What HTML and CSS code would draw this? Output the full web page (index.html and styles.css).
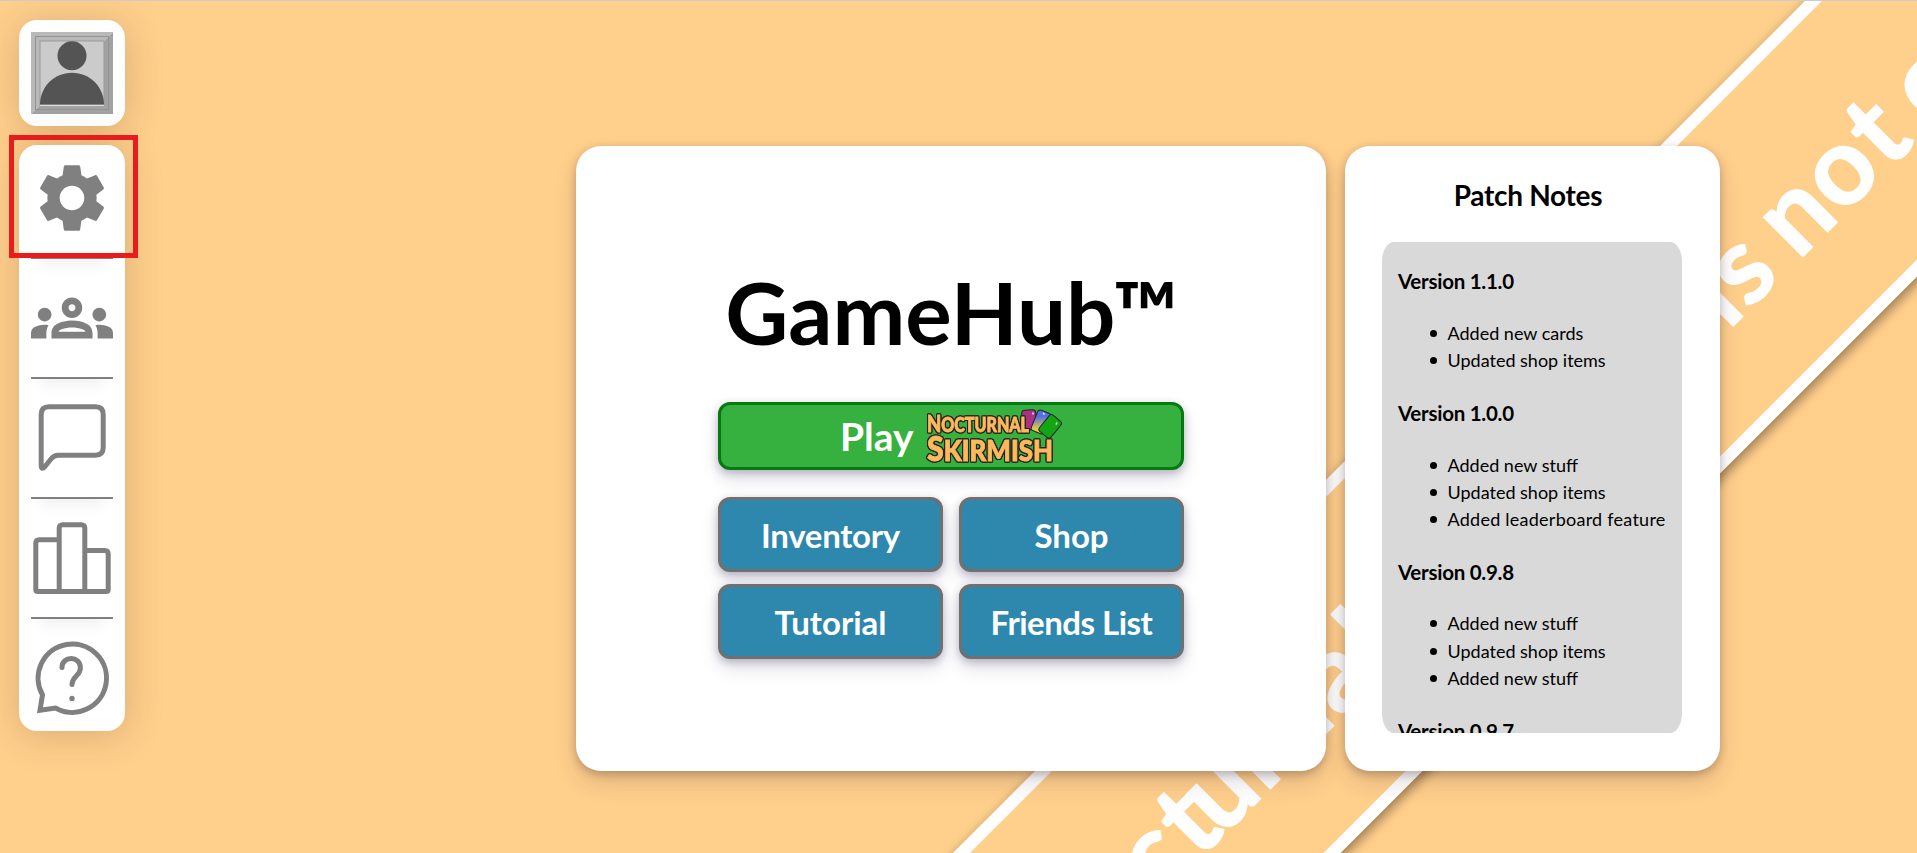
FILE: index.html
```html
<!DOCTYPE html>
<html lang="en">
<head>
<meta charset="utf-8">
<title>GameHub</title>
<link rel="stylesheet" href="styles.css">
</head>
<body>
<svg class="ribbon" viewBox="0 0 1917 853" aria-hidden="true">
  <g transform="rotate(-45)">
    <rect class="ribbon-base" x="-200" y="1277" width="2000" height="274"/>
    <rect class="ribbon-line" x="-200" y="1277" width="2000" height="12"/>
    <rect class="ribbon-line" x="-200" y="1539" width="2000" height="12"/>
    <text class="ribbon-text" y="1456" x="183 239 272 334 375 439 500">cturnal</text>
    <text class="ribbon-text" y="1456" x="988 1017">is</text>
    <text class="ribbon-text" y="1456" x="1087 1149 1214">not</text>
    <text class="ribbon-text" y="1456" x="1276">o</text>
  </g>
</svg>

<aside class="sidebar">
  <a class="tile" href="#">
    <svg class="icon" viewBox="0 0 82 82">
      <path fill="#b9b9b9" d="M0 0H82L73 9H9V73L0 82Z"/>
      <path fill="#a2a2a2" d="M82 0V82H0L9 73H73V9Z"/>
      <rect x="4.5" y="4.5" width="73" height="73" fill="none" stroke="#929292"/>
      <rect x="9" y="9" width="64" height="64" fill="#cbcbcb" stroke="#999"/>
      <circle cx="41" cy="23.7" r="14.5" fill="#545454"/>
      <path fill="#545454" d="M9 72.5C9 55 23 40.7 41 40.7S73 55 73 72.5Z"/>
      <path stroke="#ddd" d="M9 73.5H73"/>
    </svg>
  </a>
  <nav class="menu">
    <a class="menu-item" href="#">
      <svg class="icon fill" viewBox="0 0 24 24"><path d="M19.14 12.94c.04-.3.06-.61.06-.94 0-.32-.02-.64-.07-.94l2.03-1.58c.18-.14.23-.41.12-.61l-1.92-3.32c-.12-.22-.37-.29-.59-.22l-2.39.96c-.5-.38-1.03-.7-1.62-.94l-.36-2.54c-.04-.24-.24-.41-.48-.41h-3.84c-.24 0-.43.17-.47.41l-.36 2.54c-.59.24-1.13.57-1.62.94l-2.39-.96c-.22-.08-.47 0-.59.22L2.74 8.87c-.12.21-.08.47.12.61l2.03 1.58c-.05.3-.09.63-.09.94s.02.64.07.94l-2.03 1.58c-.18.14-.23.41-.12.61l1.92 3.32c.12.22.37.29.59.22l2.39-.96c.5.38 1.03.7 1.62.94l.36 2.54c.05.24.24.41.48.41h3.84c.24 0 .44-.17.47-.41l.36-2.54c.59-.24 1.13-.56 1.62-.94l2.39.96c.22.08.47 0 .59-.22l1.92-3.32c.12-.22.07-.47-.12-.61l-2.01-1.58zM12 15.6c-1.98 0-3.6-1.62-3.6-3.6s1.62-3.6 3.6-3.6 3.6 1.62 3.6 3.6-1.62 3.6-3.6 3.6z"/></svg>
    </a>
    <a class="menu-item" href="#">
      <svg class="icon fill" viewBox="0 0 24 24"><path d="M4 13c1.1 0 2-.9 2-2s-.9-2-2-2-2 .9-2 2 .9 2 2 2zm1.13 1.1c-.37-.06-.74-.1-1.13-.1-.99 0-1.93.21-2.78.58C.48 14.9 0 15.62 0 16.43V18h4.5v-1.61c0-.83.23-1.61.63-2.29zM20 13c1.1 0 2-.9 2-2s-.9-2-2-2-2 .9-2 2 .9 2 2 2zm4 3.43c0-.81-.48-1.53-1.22-1.85-.85-.37-1.79-.58-2.78-.58-.39 0-.76.04-1.13.1.4.68.63 1.46.63 2.29V18H24v-1.57zm-7.76-2.78c-1.17-.52-2.61-.9-4.24-.9s-3.07.39-4.24.9C6.68 14.13 6 15.21 6 16.39V18h12v-1.61c0-1.18-.68-2.26-1.76-2.74zM8.07 16c.09-.23.13-.39.91-.69.97-.38 1.99-.56 3.02-.56s2.05.18 3.02.56c.77.3.81.46.91.69H8.07zM12 8c.55 0 1 .45 1 1s-.45 1-1 1-1-.45-1-1 .45-1 1-1m0-2c-1.66 0-3 1.34-3 3s1.34 3 3 3 3-1.34 3-3-1.34-3-3-3z"/></svg>
    </a>
    <a class="menu-item" href="#">
      <svg class="icon line" viewBox="0 0 82 82"><path d="M18 9.8H64.5Q72.2 9.8 72.2 17.5V50.5Q72.2 58.2 64.5 58.2H27Q23 58.2 19.8 62.2L13.8 69.8Q10.2 73.5 10.2 68V17.5Q10.2 9.8 18 9.8Z"/></svg>
    </a>
    <a class="menu-item" href="#">
      <svg class="icon line" viewBox="0 0 82 82"><path d="M28.2 74.5H6.8Q4.8 74.5 4.8 72.5V26.3Q4.8 22.8 8.3 22.8H28.2M28.2 74.5V11.3Q28.2 7.8 31.7 7.8H50.3Q53.8 7.8 53.8 11.3V74.5ZM53.8 33.5H73.7Q77.2 33.5 77.2 37V72.5Q77.2 74.5 75.2 74.5H53.8"/></svg>
    </a>
    <a class="menu-item" href="#">
      <svg class="icon line help" viewBox="0 0 82 82"><path d="M11.5 58A34.2 34.2 0 1 1 24.5 71L9 73.2Z"/><path stroke-linecap="round" d="M31 30.5C31 18.5 49.4 18.5 49.4 31C49.4 39 41 39 41 47.5"/><circle class="dot" cx="41" cy="61.4" r="2.7"/></svg>
    </a>
  </nav>
  <div class="highlight"></div>
</aside>

<main class="panels">
  <section class="card home">
    <h1 class="title">GameHub™</h1>
    <button class="btn play"><span class="play-label">Play</span>
      <svg class="logo" viewBox="0 0 138 56">
        <defs><linearGradient id="blue" x1="0" y1="0" x2=".3" y2="1"><stop offset=".35" stop-color="#5470e0"/><stop offset=".9" stop-color="#e5c944"/></linearGradient></defs>
        <g stroke="#20242c" stroke-width="1">
          <rect x="96" y="2" width="14" height="20" rx="3" fill="#ab3087" transform="rotate(-2 103 12)"/>
          <rect x="108" y="3" width="14" height="22" rx="3" fill="url(#blue)" transform="rotate(22 115 14)"/>
          <rect x="117" y="8" width="15" height="21" rx="3" fill="#13a513" transform="rotate(39 124.500 18)"/>
        </g>
        <path stroke="#fff" stroke-width="1.4" d="M107 4.500v2M117 5l1.500 1.500M131 14.500l-1 2"/>
        <text class="logo-text" y="24" textLength="102" lengthAdjust="spacingAndGlyphs" x="1"><tspan font-size="23">N</tspan><tspan font-size="20">OCTURNAL</tspan></text>
        <text class="logo-text" y="53" textLength="126" lengthAdjust="spacingAndGlyphs" x="1"><tspan font-size="34">S</tspan><tspan font-size="29">KIRMISH</tspan></text>
      </svg>
    </button>
    <div class="grid">
      <button class="btn inventory">Inventory</button>
      <button class="btn shop">Shop</button>
      <button class="btn tutorial">Tutorial</button>
      <button class="btn friends">Friends List</button>
    </div>
  </section>
  <section class="card notes">
    <h2 class="notes-title">Patch Notes</h2>
    <div class="log">
      <h3>Version 1.1.0</h3>
      <ul><li>Added new cards</li><li>Updated shop items</li></ul>
      <h3>Version 1.0.0</h3>
      <ul><li>Added new stuff</li><li>Updated shop items</li><li class="wide">Added leaderboard feature</li></ul>
      <h3>Version 0.9.8</h3>
      <ul><li>Added new stuff</li><li>Updated shop items</li><li>Added new stuff</li></ul>
      <h3>Version 0.9.7</h3>
    </div>
  </section>
</main>
</body>
</html>
```
FILE: styles.css
```css
* { box-sizing: border-box; }
body {
  margin: 0;
  height: 853px;
  overflow: hidden;
  position: relative;
  display: flex;
  border-top: 1px solid #ccc;
  background: #ffcf8c;
  font-family: Lato, "Open Sans", sans-serif;
  color: #000;
}
h1, h2, h3, ul { margin: 0; padding: 0; }

/* Diagonal banner behind the panels */
.ribbon { position: absolute; left: 0; top: -1px; width: 1917px; height: 853px; }
.ribbon-base { fill: #ffcf8c; filter: drop-shadow(3px 4px 6px rgba(60, 40, 20, .55)); }
.ribbon-line { fill: #fff; }
.ribbon-text { fill: #fff; stroke: #fff; stroke-width: 1.5px; font-size: 108px; font-weight: 700; }

.sidebar {
  position: relative;
  width: 125px;
  padding: 19px 0 0 19px;
  display: flex;
  flex-direction: column;
  gap: 19px;
}
.tile, .menu {
  background: #fff;
  border-radius: 18px;
  padding: 12px;
  box-shadow: 0 4px 36px rgba(100, 70, 40, .25);
}
.tile { height: 106px; }
.menu { height: 586px; display: flex; flex-direction: column; gap: 18px; }
.menu-item { display: block; height: 102px; border-bottom: 2px solid gray; box-shadow: 0 14px 14px -8px rgba(0, 0, 0, .06); }
.menu-item:last-child { height: 82px; border: 0; box-shadow: none; }
.icon { display: block; width: 82px; height: 82px; }
.fill { fill: gray; }
.line { fill: none; stroke: gray; stroke-width: 5; stroke-linejoin: round; }
.help path:first-child { stroke-linejoin: miter; }
.dot { fill: gray; stroke: none; }
.highlight {
  position: absolute;
  left: 9px;
  top: 134px;
  width: 129px;
  height: 123px;
  border: 5px solid #e81c1c;
}

.panels {
  position: relative;
  display: flex;
  gap: 19px;
  margin: 145px 0 0 451px;
}
.card {
  height: 625px;
  background: #fff;
  border-radius: 25px;
  box-shadow: 0 12px 24px -2px rgba(60, 35, 40, .17), 0 3px 8px rgba(60, 35, 40, .28);
}
.home { width: 750px; padding: 114px 142px 0; }
.title {
  height: 104px;
  line-height: 104px;
  margin-bottom: 38px;
  padding-left: 2px;
  font-size: 87px;
  text-align: center;
  white-space: nowrap;
}
.btn {
  font: 700 33px Lato, sans-serif;
  color: #fff;
  padding: 0;
  height: 75px;
  border: 3px solid #707070;
  border-radius: 12px;
  background: #2e87ad;
  white-space: nowrap;
  box-shadow: 0 10px 18px rgba(30, 20, 70, .12), 0 3px 8px rgba(30, 20, 60, .26);
}
.inventory { letter-spacing: -.3px; }
.friends { letter-spacing: -.5px; }
.play {
  display: flex;
  align-items: center;
  width: 466px;
  height: 68px;
  padding-left: 119px;
  font-size: 39px;
  border-color: #067a10;
  background: #36b03e;
}
.play-label { width: 86px; text-align: left; }
.logo { width: 138px; height: 56px; overflow: visible; }
.logo-text {
  font-weight: 900;
  fill: #fbb960;
  stroke: #fbb960;
  stroke-width: .9px;
  filter: drop-shadow(1px 0 0 #2a2418) drop-shadow(-1px 0 0 #2a2418) drop-shadow(0 1px 0 #2a2418) drop-shadow(0 -1px 0 #2a2418);
}
.grid { display: grid; grid-template-columns: 225px 225px; gap: 12px 16px; margin-top: 27px; }

.notes { width: 375px; padding: 30px 38px 0 37px; }
.notes-title { height: 66px; line-height: 38px; font-size: 28px; letter-spacing: -.3px; padding-right: 8px; text-align: center; }
.log {
  width: 300px;
  height: 491px;
  overflow: hidden;
  padding: 25px 0 0 16px;
  border-radius: 4%;
  background: #d9d9d9;
}
.log h3 { font-size: 20.5px; line-height: 28px; letter-spacing: -.25px; }
.log ul { margin: 24.8px 0; padding-left: 49.5px; list-style: none; }
.log li { font-size: 18px; line-height: 27.1px; white-space: nowrap; }
.log li::before {
  content: "";
  display: inline-block;
  width: 7px;
  height: 7px;
  margin: 0 11px 3px -18px;
  border-radius: 50%;
  background: #000;
}
.log .wide { letter-spacing: .25px; }
```
